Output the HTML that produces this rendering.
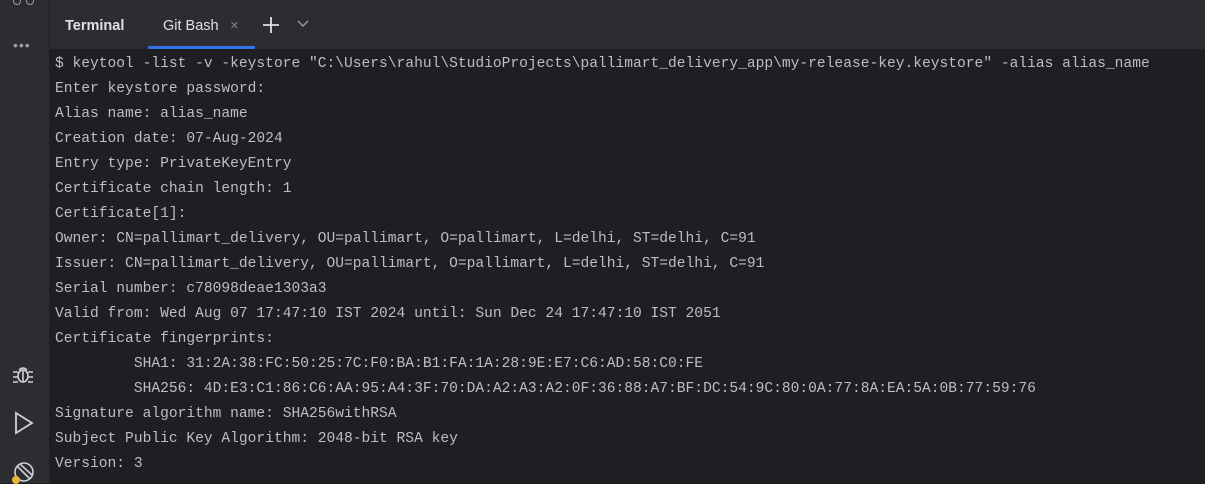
<!DOCTYPE html>
<html><head><meta charset="utf-8"><style>
body{margin:0;width:1205px;height:483px;background:#1e1f22;overflow:hidden;position:relative;font-family:"Liberation Sans",sans-serif}
#side{position:absolute;left:0;top:0;width:49px;height:483px;background:#2b2d30;border-right:1px solid #1e1f22}
#head{position:absolute;left:50px;top:0;right:0;height:49px;background:#2b2d30}
.t{position:absolute;top:18px;font-size:14.5px;color:#dfe1e5}
#term{position:absolute;left:55px;top:52px;font-family:"Liberation Mono",monospace;font-size:14.6px;line-height:25px;color:#bcbec4;white-space:pre}
</style></head><body>
<div id="side">
<div style="position:absolute;left:13px;top:-3px;width:6px;height:6px;border:1.5px solid #9a9ca3;border-radius:50%"></div>
<div style="position:absolute;left:26px;top:-3px;width:6px;height:6px;border:1.5px solid #9a9ca3;border-radius:50%"></div>
<div style="position:absolute;left:13px;top:40px;color:#9a9ca3;font-size:14px;letter-spacing:1px;line-height:10px">•••</div>
<svg style="position:absolute;left:10px;top:361px" width="26" height="26" viewBox="0 0 26 26" fill="none" stroke="#cfd1d6" stroke-width="1.6"><ellipse cx="13" cy="15" rx="5" ry="6"/><path d="M9 9 Q13 5 17 9 M3 11h5M18 11h5M3 16h5M18 16h5M3 21h5M18 21h5M13 9v12"/></svg>
<svg style="position:absolute;left:12px;top:410px" width="24" height="26" viewBox="0 0 24 26" fill="none" stroke="#cfd1d6" stroke-width="1.8"><path d="M4 3 L20 13 L4 23 Z"/></svg>
<svg style="position:absolute;left:10px;top:458px" width="28" height="26" viewBox="0 0 28 26" fill="none" stroke="#cfd1d6" stroke-width="1.6"><circle cx="14" cy="14" r="9"/><path d="M7 8 L20 21 M10 6 L22 17"/><circle cx="6" cy="22" r="4" fill="#e8b43a" stroke="none"/></svg>
</div>
<div id="head">
<div class="t" style="left:15px;font-weight:bold">Terminal</div>
<div class="t" style="left:113px">Git Bash</div>
<div class="t" style="left:180px;color:#80828a;font-size:15px;top:17px">×</div>
<svg style="position:absolute;left:212px;top:16px" width="18" height="18" viewBox="0 0 18 18" stroke="#dfe1e5" stroke-width="1.8"><path d="M9 1v16M1 9h16"/></svg>
<svg style="position:absolute;left:247px;top:20px" width="12" height="8" viewBox="0 0 12 8" fill="none" stroke="#9a9ca3" stroke-width="1.4"><path d="M1 1l5 5 5-5"/></svg>
<div style="position:absolute;left:98px;top:46px;width:107px;height:3px;background:#3574f0;border-radius:2px"></div>
</div>
<div id="term">$ keytool -list -v -keystore "C:\Users\rahul\StudioProjects\pallimart_delivery_app\my-release-key.keystore" -alias alias_name
Enter keystore password:
Alias name: alias_name
Creation date: 07-Aug-2024
Entry type: PrivateKeyEntry
Certificate chain length: 1
Certificate[1]:
Owner: CN=pallimart_delivery, OU=pallimart, O=pallimart, L=delhi, ST=delhi, C=91
Issuer: CN=pallimart_delivery, OU=pallimart, O=pallimart, L=delhi, ST=delhi, C=91
Serial number: c78098deae1303a3
Valid from: Wed Aug 07 17:47:10 IST 2024 until: Sun Dec 24 17:47:10 IST 2051
Certificate fingerprints:
         SHA1: 31:2A:38:FC:50:25:7C:F0:BA:B1:FA:1A:28:9E:E7:C6:AD:58:C0:FE
         SHA256: 4D:E3:C1:86:C6:AA:95:A4:3F:70:DA:A2:A3:A2:0F:36:88:A7:BF:DC:54:9C:80:0A:77:8A:EA:5A:0B:77:59:76
Signature algorithm name: SHA256withRSA
Subject Public Key Algorithm: 2048-bit RSA key
Version: 3</div>
</body></html>
